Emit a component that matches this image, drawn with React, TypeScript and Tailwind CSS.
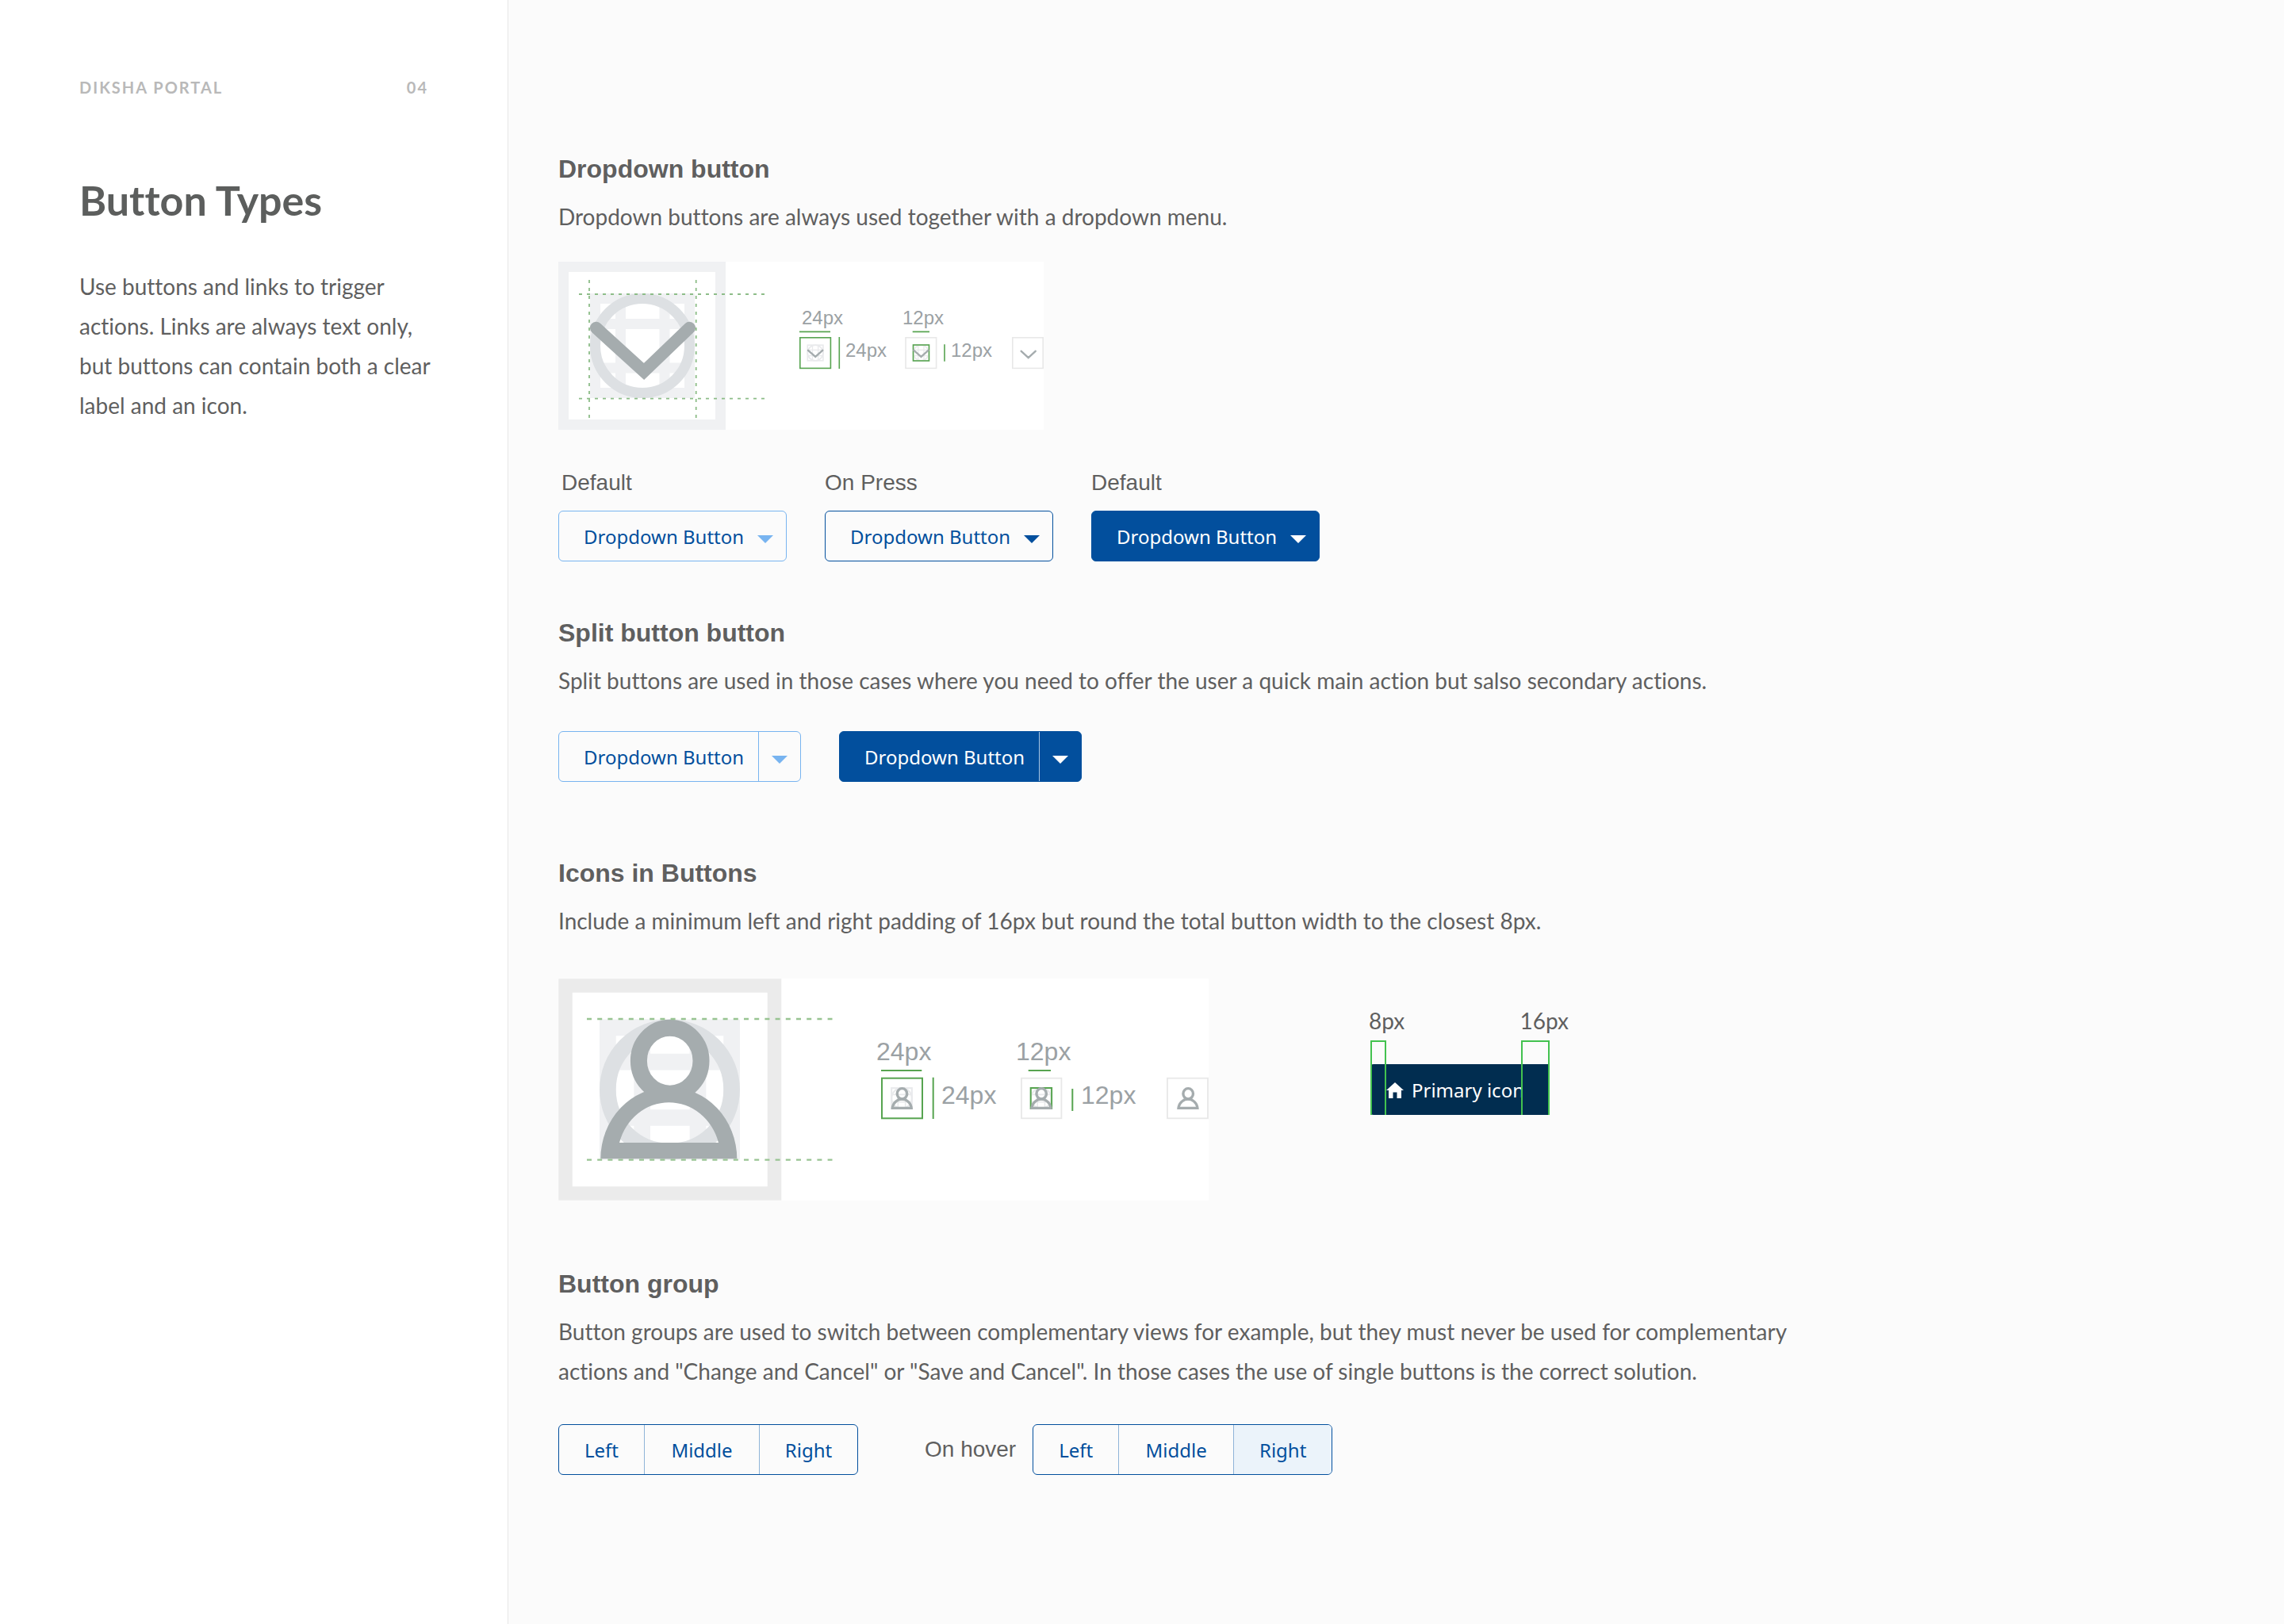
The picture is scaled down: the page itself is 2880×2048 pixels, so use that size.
import type { ReactNode } from "react";

const GREEN = "#57a450";
const GRAY = "#a5acae";

function Section({ title, text, children, className }: { title: string; text: string; children: ReactNode; className?: string }) {
  return (
    <section className={className}>
      <h2 className="font-['Liberation_Sans',Arial,sans-serif] text-[32px] leading-[40px] font-bold">{title}</h2>
      <p className="mt-[15px] max-w-[1560px] text-[28px] leading-[50px]">{text}</p>
      {children}
    </section>
  );
}

function Caret({ className }: { className?: string }) {
  return (
    <svg viewBox="0 0 20 10" className={`mt-1.5 h-[10px] w-[20px] shrink-0 ${className ?? ""}`} aria-hidden="true">
      <path d="M0 0H20L10 10Z" fill="currentColor" />
    </svg>
  );
}

function Guides({ size, stroke, lines }: { size: number; stroke: number; lines: [number, number] }) {
  const h = stroke / 2;
  return (
    <g fill="none" strokeWidth={stroke}>
      <g stroke="#f0f1f3">
        <rect x={h} y={h} width={size - stroke} height={size - stroke} />
        {lines.map((v) => (
          <path key={v} d={`M${v} 0V${size}M0 ${v}H${size}`} />
        ))}
      </g>
      <circle cx={size / 2} cy={size / 2} r={size / 2 - h} stroke="#dde0e3" />
    </g>
  );
}

function MiniGuides({ x, y, size }: { x: number; y: number; size: number }) {
  return (
    <g transform={`translate(${x} ${y}) scale(${size / 24})`} fill="none" stroke="#e9eaec" strokeWidth="1.8">
      <rect x="1" y="1" width="22" height="22" />
      <circle cx="12" cy="12" r="11" />
      <path d="M8 1V23M16 1V23M1 8H23M1 16H23" strokeWidth="1.4" />
    </g>
  );
}

function Person() {
  return (
    <g fill={GRAY}>
      <ellipse cx="88.7" cy="52" rx="39.3" ry="41.5" fill="none" stroke={GRAY} strokeWidth="21" />
      <path
        fillRule="evenodd"
        d="M1.3 175.6A86 90.5 0 0 1 173.3 175.6ZM25 155.3H150A65 70 0 0 0 25 155.3Z"
      />
    </g>
  );
}

function ChevronSpec() {
  return (
    <svg viewBox="0 0 612 212" className="h-[212px] w-[612px] bg-white" role="img" aria-label="Dropdown icon sizing">
      <rect x="6.5" y="6.5" width="198" height="199" fill="none" stroke="#f0f1f3" strokeWidth="13" />
      <g transform="translate(40 40)">
        <Guides size={132} stroke={13} lines={[38.5, 94]} />
      </g>
      <path d="M47.7 83.5L108 138.5L165.3 83.5" fill="none" stroke={GRAY} strokeWidth="15.5" strokeLinecap="round" />
      <path d="M26 41H260M26 172.7H260M39 23V197M173.7 23V197" stroke="#8dbd88" strokeWidth="1.8" strokeDasharray="4 6" />
      <g fill="none" strokeWidth="1.6" stroke={GREEN}>
        <rect x="304.8" y="95.8" width="38.6" height="38.6" />
        <path d="M304 88.4H343M354.3 95V135M446.7 88.4H468M487 104.3V125.7" />
      </g>
      <g fill="none" strokeWidth="1.6" stroke="#e8e8e8">
        <rect x="438" y="95.8" width="38.6" height="38.6" />
        <rect x="572.8" y="95.8" width="38.4" height="38.6" />
      </g>
      <MiniGuides x={313.4} y={104.3} size={21.4} />
      <MiniGuides x={446.7} y={104.3} size={21.4} />
      <rect x="447.5" y="105" width="20" height="20" fill="none" stroke={GREEN} strokeWidth="1.6" />
      <g fill="none" stroke={GRAY} strokeWidth="2.4" strokeLinecap="round">
        <path d="M315 111.8L324.2 120L333.2 111.8M448.3 111.8L457.5 120L466.5 111.8M583.7 112.8L592.7 121.2L601.7 112.8" />
      </g>
      <g fill="#9ba1a4" fontFamily="Liberation Sans, Arial, sans-serif" fontSize="24">
        <text x="307" y="79">24px</text>
        <text x="362" y="120">24px</text>
        <text x="434" y="79">12px</text>
        <text x="495" y="120">12px</text>
      </g>
    </svg>
  );
}

function PersonSpec() {
  return (
    <svg viewBox="0 0 820 280" className="h-[280px] w-[820px] bg-white" role="img" aria-label="Person icon sizing">
      <rect x="9" y="9" width="263.5" height="262" fill="none" stroke="#ebebeb" strokeWidth="17.5" />
      <g transform="translate(52 51.5)">
        <Guides size={177} stroke={20.7} lines={[53.7, 124]} />
      </g>
      <g transform="translate(52 51.7)">
        <Person />
      </g>
      <path d="M36 51H345.5M36 228.6H345.5" stroke="#98c492" strokeWidth="2.4" strokeDasharray="6 7.2" />
      <g fill="none" strokeWidth="2" stroke={GREEN}>
        <rect x="408" y="125.7" width="51" height="50.6" />
        <path d="M407 116H458.3M472.7 124.7V177M592.7 116H621M648.3 139V167" />
      </g>
      <g fill="none" strokeWidth="1.8" stroke="#e8e8e8">
        <rect x="584" y="125.7" width="50.4" height="50.6" />
        <rect x="768" y="125.7" width="51" height="50.6" />
      </g>
      <MiniGuides x={419} y={137} size={28} />
      <MiniGuides x={594.8} y={137} size={28} />
      <rect x="595.7" y="138" width="26.4" height="26" fill="none" stroke={GREEN} strokeWidth="2" />
      {[419.3, 595, 780].map((x) => (
        <g key={x} transform={`translate(${x} 137) scale(0.16)`}>
          <Person />
        </g>
      ))}
      <g fill="#9ba1a4" fontFamily="Liberation Sans, Arial, sans-serif" fontSize="32">
        <text x="401" y="103">24px</text>
        <text x="483" y="158">24px</text>
        <text x="577" y="103">12px</text>
        <text x="659" y="158">12px</text>
      </g>
    </svg>
  );
}

const buttonText = "font-['Noto_Sans',sans-serif] text-[24px] leading-[32px] whitespace-nowrap";

function DropdownButton({ label, tone, labelClass, caret }: { label: string; tone: string; labelClass?: string; caret?: string }) {
  return (
    <div className="flex flex-col gap-[15px]">
      <span className={`font-['Liberation_Sans',Arial,sans-serif] text-[28px] leading-[40px] ${labelClass ?? ""}`}>{label}</span>
      <button type="button" className={`flex h-16 w-[288px] items-center justify-between rounded-[6px] border pt-px pr-4 pl-[31px] ${buttonText} ${tone}`}>
        Dropdown Button
        <Caret className={caret} />
      </button>
    </div>
  );
}

function SplitButton({ tone, divider, caret }: { tone: string; divider: string; caret?: string }) {
  return (
    <div className={`flex h-16 w-[306px] overflow-hidden rounded-[6px] border ${tone}`}>
      <button type="button" className={`flex-1 pt-px pl-[31px] text-left ${buttonText}`}>Dropdown Button</button>
      <button type="button" aria-label="More actions" className={`flex w-[53px] items-center justify-center border-l pt-px ${divider}`}>
        <Caret className={caret} />
      </button>
    </div>
  );
}

const groupItems = [
  { name: "Left", width: "w-[107px]" },
  { name: "Middle", width: "w-[145px] border-l border-[#8fb4d8]" },
  { name: "Right", width: "flex-1 border-l border-[#8fb4d8]" },
];

function ButtonGroup({ hovered }: { hovered?: string }) {
  return (
    <div role="group" className="flex h-16 w-[378px] overflow-hidden rounded-[6px] border border-[#024f9d]">
      {groupItems.map(({ name, width }) => (
        <button key={name} type="button" className={`pt-px text-[#024f9d] ${buttonText} ${width} ${hovered === name ? "bg-[#ebf3fa]" : ""}`}>
          {name}
        </button>
      ))}
    </div>
  );
}

function PaddingSpec() {
  return (
    <div className="mt-7 w-[252px]">
      <div className="flex justify-between text-[28px] leading-[50px]">
        <span>8px</span>
        <span>16px</span>
      </div>
      <div className="relative ml-[2px] w-[226px] pt-[30px]">
        <button type="button" className={`flex h-16 w-full items-center overflow-hidden rounded-[4px] bg-[#012d50] pt-px pl-[20px] text-white ${buttonText}`}>
          <svg viewBox="0 0 22 20" className="h-[20px] w-[22px] shrink-0" aria-hidden="true">
            <path d="M11 0L22 10H19V20H13.5V12.5H8.5V20H3V10H0Z" fill="currentColor" />
          </svg>
          <span className="ml-[10px]">Primary icon</span>
        </button>
        <div className="absolute top-0 bottom-0 left-0 w-[20px] border-2 border-b-0 border-[#43c24f]" />
        <div className="absolute top-0 right-0 bottom-0 flex w-[36px] flex-col border-2 border-b-0 border-[#43c24f] pt-[28px]">
          <div className="flex-1 bg-[#012d50]" />
        </div>
      </div>
    </div>
  );
}

export default function App() {
  return (
    <div className="flex min-h-screen bg-[#fbfbfb] font-['Lato',sans-serif] text-[#5f5f5f] [font-variant-ligatures:none]">
      <aside className="w-[641px] shrink-0 border-r border-[#e6e6e6] bg-white px-[100px] pt-[98px]">
        <div className="flex justify-between text-[20px] leading-[24px] font-bold tracking-[2px] text-[#b9b9b9]">
          <span>DIKSHA PORTAL</span>
          <span>04</span>
        </div>
        <h1 className="mt-[98px] text-[52px] leading-[64px] font-bold text-[#5c5e5d]">Button Types</h1>
        <p className="mt-[52px] -mr-3 text-[28px] leading-[50px]">
          Use buttons and links to trigger actions. Links are always text only, but buttons can contain both a clear label and an icon.
        </p>
      </aside>
      <main className="flex-1 pt-[193px] pl-[63px]">
        <Section title="Dropdown button" text="Dropdown buttons are always used together with a dropdown menu.">
          <div className="mt-8"><ChevronSpec /></div>
          <div className="mt-[47px] flex gap-12">
            <DropdownButton label="Default" labelClass="pl-1" tone="border-[#78b4f0] text-[#024f9d]" caret="text-[#78b4f0]" />
            <DropdownButton label="On Press" tone="border-[#024f9d] text-[#024f9d]" />
            <DropdownButton label="Default" tone="border-[#024f9d] bg-[#024f9d] text-white" />
          </div>
        </Section>
        <Section className="mt-[70px]" title="Split button button" text="Split buttons are used in those cases where you need to offer the user a quick main action but salso secondary actions.">
          <div className="mt-[39px] flex gap-12">
            <SplitButton tone="border-[#78b4f0] text-[#024f9d]" divider="border-[#78b4f0]" caret="text-[#78b4f0]" />
            <SplitButton tone="border-[#024f9d] bg-[#024f9d] text-white" divider="border-[#a9c6e2]" />
          </div>
        </Section>
        <Section className="mt-[95px]" title="Icons in Buttons" text="Include a minimum left and right padding of 16px but round the total button width to the closest 8px.">
          <div className="mt-12 flex gap-[202px]">
            <PersonSpec />
            <PaddingSpec />
          </div>
        </Section>
        <Section
          className="mt-[85px]"
          title="Button group"
          text={'Button groups are used to switch between complementary views for example, but they must never be used for complementary actions and "Change and Cancel" or "Save and Cancel". In those cases the use of single buttons is the correct solution.'}
        >
          <div className="mt-[42px] flex items-center">
            <ButtonGroup />
            <span className="mr-[21px] ml-[84px] font-['Liberation_Sans',Arial,sans-serif] text-[28px] leading-[40px]">On hover</span>
            <ButtonGroup hovered="Right" />
          </div>
        </Section>
      </main>
    </div>
  );
}
